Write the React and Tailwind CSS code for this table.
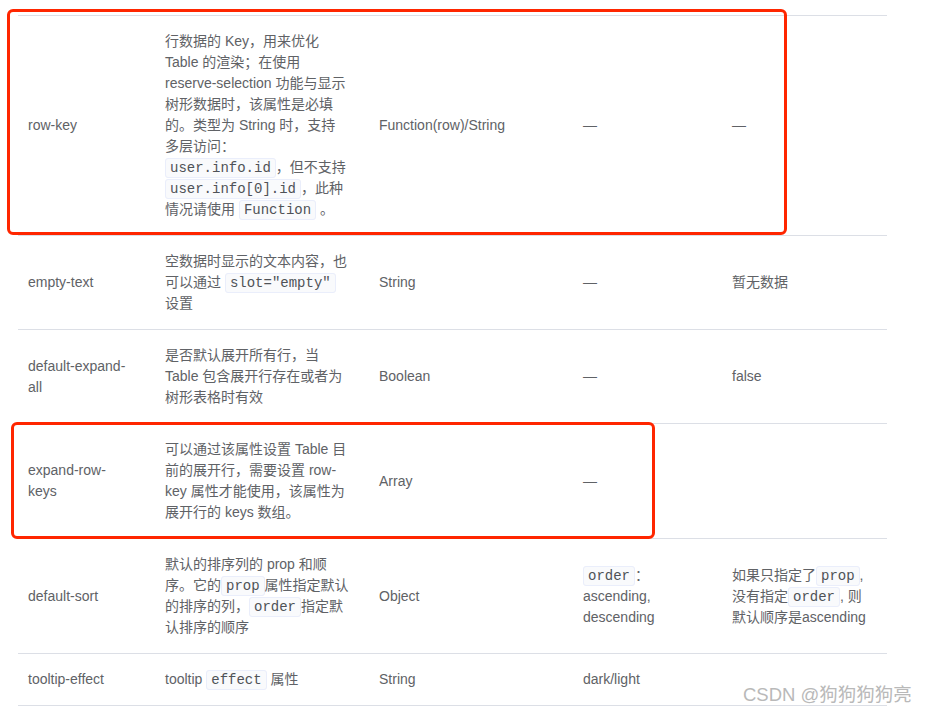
const Code = ({ children }) => (
    <code className="font-['Liberation_Mono',monospace] text-[14px] leading-none text-[#4f5257] bg-[#f9fafc] border border-[#eaeefb] rounded-[3px] px-1 py-px">
        {children}
    </code>
);

const rows = [
    {
        name: 'row-key',
        desc: (
            <>
                行数据的 Key，用来优化<br />
                Table 的渲染；在使用<br />
                reserve-selection 功能与显示<br />
                树形数据时，该属性是必填<br />
                的。类型为 String 时，支持<br />
                多层访问：<br />
                <Code>user.info.id</Code>，但不支持<br />
                <Code>user.info[0].id</Code>，此种<br />
                情况请使用 <Code>Function</Code> 。
            </>
        ),
        type: 'Function(row)/String',
        options: '—',
        def: '—',
    },
    {
        name: 'empty-text',
        desc: (
            <>
                空数据时显示的文本内容，也<br />
                可以通过 <Code>slot="empty"</Code><br />
                设置
            </>
        ),
        type: 'String',
        options: '—',
        def: '暂无数据',
    },
    {
        name: (
            <>
                default-expand-<br />all
            </>
        ),
        desc: (
            <>
                是否默认展开所有行，当<br />
                Table 包含展开行存在或者为<br />
                树形表格时有效
            </>
        ),
        type: 'Boolean',
        options: '—',
        def: 'false',
    },
    {
        name: (
            <>
                expand-row-<br />keys
            </>
        ),
        desc: (
            <>
                可以通过该属性设置 Table 目<br />
                前的展开行，需要设置 row-<br />
                key 属性才能使用，该属性为<br />
                展开行的 keys 数组。
            </>
        ),
        type: 'Array',
        options: '—',
        def: '',
    },
    {
        name: 'default-sort',
        desc: (
            <>
                默认的排序列的 prop 和顺<br />
                序。它的<Code>prop</Code>属性指定默认<br />
                的排序的列，<Code>order</Code>指定默<br />
                认排序的顺序
            </>
        ),
        type: 'Object',
        options: (
            <>
                <Code>order</Code>：<br />
                ascending,<br />
                descending
            </>
        ),
        def: (
            <>
                如果只指定了<Code>prop</Code>,<br />
                没有指定<Code>order</Code>, 则<br />
                默认顺序是ascending
            </>
        ),
    },
    {
        name: 'tooltip-effect',
        desc: (
            <>
                tooltip <Code>effect</Code> 属性
            </>
        ),
        type: 'String',
        options: 'dark/light',
        def: '',
    },
];

export default function App() {
    return (
        <div className="relative w-[929px] h-[714px] overflow-hidden bg-white pt-[15px] pl-[18px] font-['Liberation_Sans','Noto_Sans_CJK_SC',sans-serif] text-[14px] leading-[21px] text-[#606266]">
            <div className="w-[869px] border-t border-[#dcdfe6]">
                {rows.map((row, i) => (
                    <div
                        key={i}
                        className="grid grid-cols-[132px_214px_204px_149px_170px] items-center border-b border-[#dcdfe6]"
                    >
                        <div className="py-[15px] pl-[10px] pr-[15px] whitespace-nowrap">{row.name}</div>
                        <div className="py-[15px] px-[15px] whitespace-nowrap">{row.desc}</div>
                        <div className="py-[15px] px-[15px] whitespace-nowrap">{row.type}</div>
                        <div className="py-[15px] px-[15px] whitespace-nowrap">{row.options}</div>
                        <div className="py-[15px] px-[15px] whitespace-nowrap">{row.def}</div>
                    </div>
                ))}
            </div>

            {/* annotation boxes */}
            <div className="absolute left-[7px] top-[9px] w-[780px] h-[226px] border-[3px] border-[#ff2600] rounded-[6px]" />
            <div className="absolute left-[11px] top-[422px] w-[644px] h-[117px] border-[3px] border-[#ff2600] rounded-[6px]" />

            <div className="absolute left-[743px] top-[683px] text-[18.5px] leading-[24px] text-[#b9b9b9] [text-shadow:0_0_2px_#ffffff] whitespace-nowrap">
                CSDN @狗狗狗狗亮
            </div>
        </div>
    );
}
